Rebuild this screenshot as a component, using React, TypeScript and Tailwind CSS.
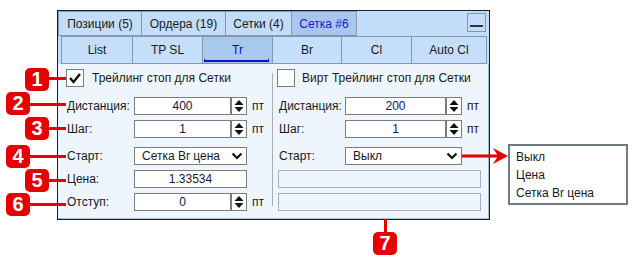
import React from "react";

const Spinner = () => (
  <div className="w-[16px] h-[18px] border border-[#7c7c7c] bg-white flex items-center justify-center">
    <svg width="12" height="14" viewBox="0 0 12 14">
      <polygon points="1.5,6 6,1 10.5,6" fill="#111" />
      <polygon points="1.5,8 6,13 10.5,8" fill="#111" />
    </svg>
  </div>
);

const Chevron = () => (
  <svg width="12" height="8" viewBox="0 0 12 8">
    <polyline points="1.5,1.5 6,6 10.5,1.5" fill="none" stroke="#111" strokeWidth="2.2" />
  </svg>
);

const Check = () => (
  <svg width="16" height="16" viewBox="0 0 16 16">
    <polyline points="3,8 6.5,12 13,4" fill="none" stroke="#111" strokeWidth="2.4" />
  </svg>
);

const Badge = ({ n, left, top }: { n: number; left: number; top: number }) => (
  <div
    className="absolute w-[24px] h-[23px] rounded-[5px] bg-[#e60000] text-white font-bold text-[20px] leading-[23px] text-center"
    style={{ left, top }}
  >
    {n}
  </div>
);

const HLine = ({ left, top, width }: { left: number; top: number; width: number }) => (
  <div className="absolute h-[3px] bg-[#e60000]" style={{ left, top, width }} />
);

export default function App() {
  const tabs = [
    { t: "Позиции (5)", w: "w-[84px] border-l" },
    { t: "Ордера (19)", w: "w-[84px]" },
    { t: "Сетки (4)", w: "w-[66px]" },
  ];
  return (
    <div className="relative w-[634px] h-[258px] bg-white pt-[10px] pl-[57px] font-['Liberation_Sans',Arial,sans-serif] text-[12px] text-[#1a1a1a]">
      <div className="w-[433px] h-[210px] border border-[#0e2135] bg-[#c3dcfa] flex flex-col">
        {/* top tabs */}
        <div className="h-[25px] flex shrink-0">
          {tabs.map((x) => (
            <div
              key={x.t}
              className={`${x.w} h-[25px] border-y border-r border-[#8797ab] flex items-center justify-center`}
            >
              {x.t}
            </div>
          ))}
          <div className="w-[65px] h-[25px] border-y border-r border-[#8797ab] bg-[#a9c7ee] text-[#1515d0] flex items-center justify-center">
            Сетка #6
          </div>
          <div className="flex-1" />
          <div className="w-[19px] h-[19px] mt-[2px] mr-[3px] border border-[#8797ab] flex items-end justify-center pb-[4px]">
            <div className="w-[13px] h-[2px] bg-[#333]" />
          </div>
        </div>
        {/* sub tabs */}
        <div className="h-[28px] shrink-0 pl-[3px] pr-[2px]">
          <div className="h-[28px] border border-[#8797ab] flex bg-[#c5defc]">
            <div className="w-[71px] border-r border-[#8797ab] flex items-center justify-center">List</div>
            <div className="w-[70px] border-r border-[#8797ab] flex items-center justify-center">TP SL</div>
            <div className="relative w-[70px] border-r border-[#8797ab] bg-[#a9c8ee] text-[#0a0ad0] flex items-center justify-center">
              Tr
              <div className="absolute left-[1px] right-[3px] bottom-[1px] h-[3px] border-x border-b-2 border-[#1010d0]" />
            </div>
            <div className="w-[69px] border-r border-[#8797ab] flex items-center justify-center">Br</div>
            <div className="w-[70px] border-r border-[#8797ab] flex items-center justify-center">Cl</div>
            <div className="flex-1 flex items-center justify-center">Auto Cl</div>
          </div>
        </div>
        {/* content */}
        <div className="flex-1 bg-[#eef5fd] border-r border-b border-[#a9bfd6] flex">
          {/* left column */}
          <div className="w-[214px] pl-[9px] pt-[5px] flex flex-col">
            <div className="h-[18px] flex items-center -ml-[1px]">
              <div className="w-[18px] h-[18px] border border-[#7c7c7c] bg-white flex items-center justify-center">
                <Check />
              </div>
              <span className="ml-[8px]">Трейлинг стоп для Сетки</span>
            </div>
            <div className="h-[18px] mt-[10px] flex items-center">
              <span className="w-[67px]">Дистанция:</span>
              <div className="w-[97px] h-[18px] border border-[#7c7c7c] bg-white flex items-center justify-center text-[#141450]">400</div>
              <Spinner />
              <span className="ml-[5px]">пт</span>
            </div>
            <div className="h-[18px] mt-[5px] flex items-center">
              <span className="w-[67px]">Шаг:</span>
              <div className="w-[97px] h-[18px] border border-[#7c7c7c] bg-white flex items-center justify-center text-[#141450]">1</div>
              <Spinner />
              <span className="ml-[5px]">пт</span>
            </div>
            <div className="h-[18px] mt-[9px] flex items-center">
              <span className="w-[67px]">Старт:</span>
              <div className="w-[113px] h-[18px] border border-[#7c7c7c] bg-white flex items-center pl-[7px] pr-[3px] justify-between">
                <span>Сетка Br цена</span>
                <Chevron />
              </div>
            </div>
            <div className="h-[18px] mt-[5px] flex items-center">
              <span className="w-[67px]">Цена:</span>
              <div className="w-[113px] h-[18px] border border-[#7c7c7c] bg-white flex items-center justify-center">1.33534</div>
            </div>
            <div className="h-[18px] mt-[5px] flex items-center">
              <span className="w-[67px]">Отступ:</span>
              <div className="w-[97px] h-[18px] border border-[#7c7c7c] bg-white flex items-center justify-center text-[#141450]">0</div>
              <Spinner />
              <span className="ml-[5px]">пт</span>
            </div>
          </div>
          {/* separator */}
          <div className="w-[1px] mt-[9px] h-[133px] bg-[#a6aeb6]" />
          {/* right column */}
          <div className="flex-1 pt-[5px] flex flex-col">
            <div className="h-[18px] flex items-center ml-[4px]">
              <div className="w-[18px] h-[18px] border border-[#7c7c7c] bg-white" />
              <span className="ml-[7px]">Вирт Трейлинг стоп для Сетки</span>
            </div>
            <div className="h-[18px] mt-[10px] flex items-center ml-[6px]">
              <span className="w-[66px]">Дистанция:</span>
              <div className="w-[101px] h-[18px] border border-[#7c7c7c] bg-white flex items-center justify-center text-[#141450]">200</div>
              <Spinner />
              <span className="ml-[5px]">пт</span>
            </div>
            <div className="h-[18px] mt-[5px] flex items-center ml-[6px]">
              <span className="w-[66px]">Шаг:</span>
              <div className="w-[101px] h-[18px] border border-[#7c7c7c] bg-white flex items-center justify-center text-[#141450]">1</div>
              <Spinner />
              <span className="ml-[5px]">пт</span>
            </div>
            <div className="h-[18px] mt-[9px] flex items-center ml-[6px]">
              <span className="w-[66px]">Старт:</span>
              <div className="w-[117px] h-[18px] border border-[#7c7c7c] bg-white flex items-center pl-[7px] pr-[3px] justify-between">
                <span>Выкл</span>
                <Chevron />
              </div>
            </div>
            <div className="h-[18px] mt-[5px] ml-[5px] w-[203px] border border-[#a3b0bd] bg-[#eef5fd]" />
            <div className="h-[18px] mt-[5px] ml-[5px] w-[203px] border border-[#a3b0bd] bg-[#eef5fd]" />
          </div>
        </div>
      </div>

      {/* annotations */}
      <HLine left={45} top={77} width={21} />
      <HLine left={28} top={103} width={38} />
      <HLine left={45} top={127} width={21} />
      <HLine left={28} top={155} width={38} />
      <HLine left={45} top={179} width={21} />
      <HLine left={28} top={203} width={38} />
      <div className="absolute left-[384px] top-[219px] w-[3px] h-[15px] bg-[#e60000]" />
      <Badge n={1} left={25} top={68} />
      <Badge n={2} left={6} top={92} />
      <Badge n={3} left={25} top={117} />
      <Badge n={4} left={6} top={145} />
      <Badge n={5} left={25} top={169} />
      <Badge n={6} left={6} top={193} />
      <Badge n={7} left={373} top={232} />

      {/* arrow */}
      <svg className="absolute left-[462px] top-[147px]" width="48" height="18" viewBox="0 0 48 18">
        <rect x="0" y="7.5" width="40" height="3" fill="#e60000" />
        <polygon points="31,1 46,9 31,17 36,9" fill="#e60000" />
      </svg>

      {/* dropdown list */}
      <div className="absolute left-[508px] top-[144px] w-[120px] h-[61px] border-2 border-[#6f7c88] bg-white pl-[6px] pt-[2px] leading-[18px]">
        <div>Выкл</div>
        <div>Цена</div>
        <div>Сетка Br цена</div>
      </div>
    </div>
  );
}
